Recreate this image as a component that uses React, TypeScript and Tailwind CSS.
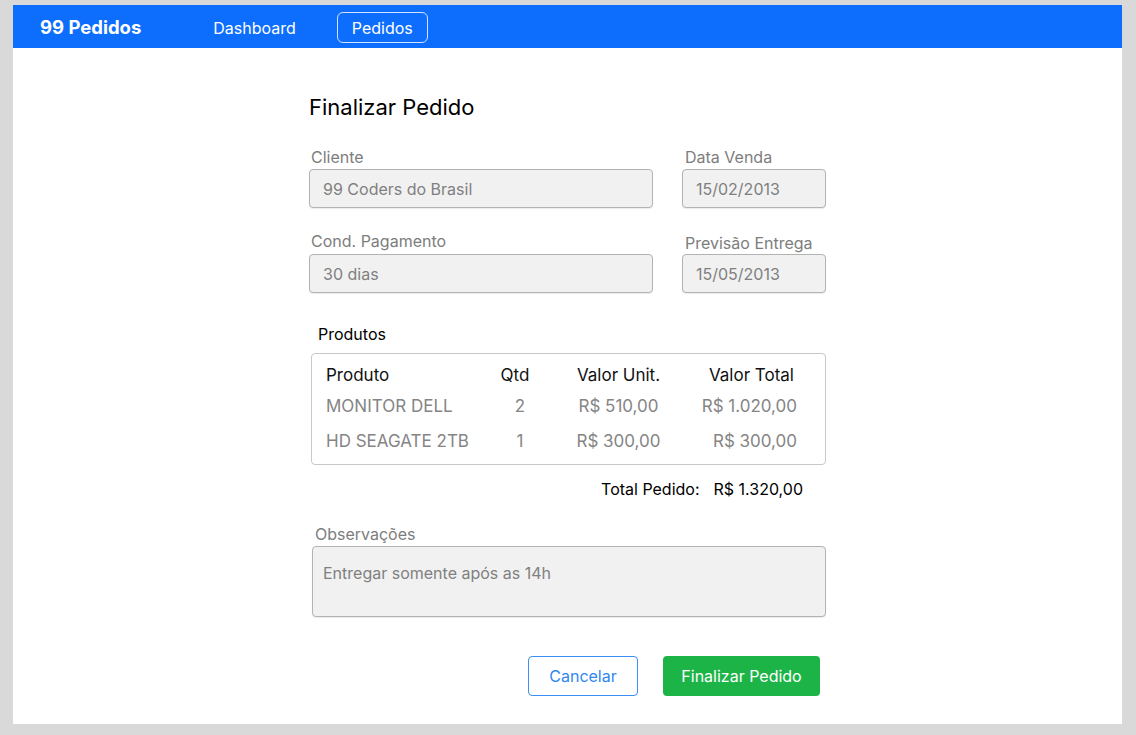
import React from "react";

const rows = [
  { produto: "MONITOR DELL", qtd: "2", unit: "R$ 510,00", total: "R$ 1.020,00" },
  { produto: "HD SEAGATE 2TB", qtd: "1", unit: "R$ 300,00", total: "R$ 300,00" },
];

function Field({ label, value, labelClass = "" }: { label: string; value: string; labelClass?: string }) {
  return (
    <div className="flex flex-col">
      <label className={`text-[16px] leading-5 text-[#7d7d7d] pl-[2px] ${labelClass}`}>{label}</label>
      <div className="mt-[2px] h-[39px] flex items-center px-[13px] bg-[#f1f1f1] border border-[#b3b3b3] rounded-[4px] text-[16px] text-[#808080] shadow-[0_1px_1px_rgba(0,0,0,0.08)]">
        {value}
      </div>
    </div>
  );
}

export default function App() {
  return (
    <div className="min-h-[735px] bg-[#d9d9d9] pt-[5px] pl-[13px] pr-[14px] pb-[11px] font-['Inter',sans-serif]">
      <div className="bg-white h-[719px] flex flex-col">
        {/* navbar */}
        <header className="h-[43px] bg-[#0d6efd] flex items-center pl-[27px] pt-[2px] text-white">
          <span className="text-[18.5px] font-bold">99 Pedidos</span>
          <nav className="flex items-center ml-[72px] gap-[41px] text-[16px]">
            <span>Dashboard</span>
            <span className="h-[31px] px-[14px] flex items-center border border-white/80 rounded-[6px]">Pedidos</span>
          </nav>
        </header>

        <main className="ml-[296px] w-[517px] flex flex-col">
          <h1 className="mt-[45px] text-[22px] leading-7 text-black">Finalizar Pedido</h1>

          <div className="mt-[26px] grid grid-cols-[344px_144px] gap-x-[29px]">
            <Field label="Cliente" value="99 Coders do Brasil" />
            <Field label="Data Venda" value="15/02/2013" labelClass="pl-[3px]" />
          </div>
          <div className="mt-[24px] grid grid-cols-[344px_144px] gap-x-[29px] items-end">
            <Field label="Cond. Pagamento" value="30 dias" labelClass="-translate-y-[1px]" />
            <Field label="Previsão Entrega" value="15/05/2013" labelClass="pl-[3px] translate-y-[1px]" />
          </div>

          <div className="mt-[31px] pl-[9px] text-[16px] leading-5 text-black">Produtos</div>

          <div className="mt-[9px] ml-[2px] border border-[#c8c8c8] rounded-[4px] pt-[7px] pb-[3px] pl-[14px] text-[17px]">
            <div className="grid grid-cols-[164px_50px_157px_100px] h-[30px] items-center text-[#111]">
              <span>Produto</span>
              <span className="text-center">Qtd</span>
              <span className="text-center">Valor Unit.</span>
              <span className="text-right pr-[3px]">Valor Total</span>
            </div>
            {rows.map((r, i) => (
              <div
                key={r.produto}
                className={`grid grid-cols-[164px_50px_157px_100px] items-center text-[#858585] ${i === 0 ? "h-[32px]" : "h-[38px]"}`}
              >
                <span>{r.produto}</span>
                <span className="text-center pl-[10px]">{r.qtd}</span>
                <span className="text-center">{r.unit}</span>
                <span className="text-right">{r.total}</span>
              </div>
            ))}
          </div>

          <div className="mt-[14px] flex justify-end pr-[23px] gap-[14px] text-[16px] leading-5 text-black">
            <span>Total Pedido:</span>
            <span>R$ 1.320,00</span>
          </div>

          <label className="mt-[25px] pl-[6px] text-[16px] leading-5 text-[#7d7d7d]">Observações</label>
          <div className="mt-[2px] ml-[3px] h-[71px] bg-[#f1f1f1] border border-[#b3b3b3] rounded-[4px] px-[10px] pt-[16px] text-[16px] leading-5 text-[#808080] shadow-[0_1px_1px_rgba(0,0,0,0.08)]">
            Entregar somente após as 14h
          </div>

          <div className="mt-[39px] flex justify-end gap-[25px] pr-[6px]">
            <button className="w-[110px] h-[40px] border border-[#3d8ef5] rounded-[4px] text-[#2f86f0] text-[16px] bg-white">
              Cancelar
            </button>
            <button className="w-[157px] h-[40px] rounded-[4px] bg-[#1db447] text-white text-[16px]">
              Finalizar Pedido
            </button>
          </div>
        </main>
      </div>
    </div>
  );
}
